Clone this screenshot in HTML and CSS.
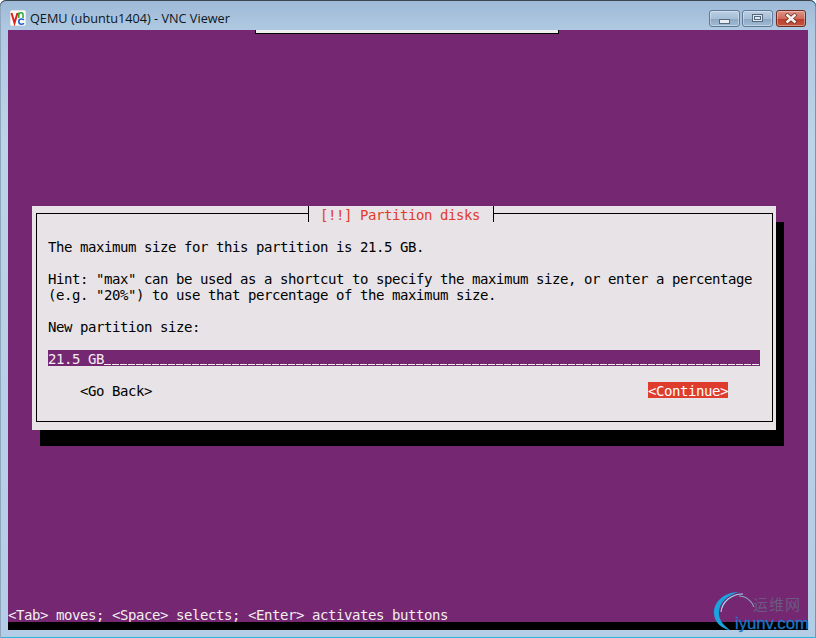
FILE: index.html
```html
<!DOCTYPE html>
<html lang="en">
<head>
<meta charset="utf-8">
<title>QEMU (ubuntu1404) - VNC Viewer</title>
<link rel="stylesheet" href="styles.css">
</head>
<body>
<div class="window">
  <header class="titlebar">
    <svg class="app-icon" width="16" height="16" viewBox="0 0 16 16">
      <rect x="0.5" y="0.5" width="15" height="15" rx="1.5" fill="#fff" stroke="#e6e6e6"/>
      <path d="M1.5 3 L4.5 13 L7.5 3" fill="none" stroke="#e0201c" stroke-width="2"/>
      <path d="M8.8 8 V2.5 M8.8 4.5 Q9.2 2.8 11 2.8 Q13 2.8 13 4.5 V8" fill="none" stroke="#2ca02c" stroke-width="1.5"/>
      <path d="M14 10 Q13 9 11.5 9 Q8.8 9 8.8 11.5 Q8.8 14.2 11.5 14.2 Q13 14.2 14 13.2" fill="none" stroke="#2060d0" stroke-width="1.6"/>
    </svg>
    <span class="title">QEMU (ubuntu1404) - VNC Viewer</span>
    <div class="controls">
      <div class="ctl"><span class="glyph-min"></span></div>
      <div class="ctl"><span class="glyph-max"></span></div>
      <div class="ctl ctl-close">
        <svg width="14" height="11" viewBox="0 0 14 11"><path d="M2 1 L12 10 M12 1 L2 10" stroke="#6a2c24" stroke-width="4"/><path d="M2.5 1.5 L11.5 9.5 M11.5 1.5 L2.5 9.5" stroke="#f6f2f0" stroke-width="2.6"/></svg>
      </div>
    </div>
  </header>
  <main class="screen">
    <div class="top-strip"></div>
    <section class="dialog">
      <div class="frame">
        <div class="dialog-title"><span>[!!] Partition disks</span></div>
        <p class="line">The maximum size for this partition is 21.5 GB.</p>
        <p class="line gap">Hint: "max" can be used as a shortcut to specify the maximum size, or enter a percentage</p>
        <p class="line">(e.g. "20%") to use that percentage of the maximum size.</p>
        <p class="line gap">New partition size:</p>
        <div class="field"><span>21.5 GB</span></div>
        <div class="buttons">
          <span class="btn">&lt;Go Back&gt;</span>
          <span class="btn btn-active">&lt;Continue&gt;</span>
        </div>
      </div>
    </section>
    <footer class="status">&lt;Tab&gt; moves; &lt;Space&gt; selects; &lt;Enter&gt; activates buttons</footer>
    <div class="screen-end"></div>
  </main>
  <div class="watermark">
    <svg class="wm-arc" width="48" height="44" viewBox="0 0 48 44">
      <path d="M26 1 C10 1 0 12 1 23 C2 32 9 38 17 39 C10 34 5 28 6 20 C7 11 15 4 26 1Z" fill="#1aa3de"/>
      <path d="M30 3 C18 3 9 11 8 21" fill="none" stroke="#a6d8ee" stroke-width="1.1"/>
      <path d="M26 5 C33 5 38 9 41 16" fill="none" stroke="#8aa9c4" stroke-width="1.1"/>
    </svg>
    <span class="wm-cn">运维网</span>
    <span class="wm-en">iyunv.com</span>
  </div>
</div>
</body>
</html>
```
FILE: styles.css
```css
html, body { margin: 0; padding: 0; width: 816px; height: 638px; overflow: hidden; background: #fff; }
.window {
  position: relative;
  width: 816px; height: 638px; box-sizing: border-box;
  padding: 0 8px 8px;
  border-radius: 6px 6px 0 0;
  background: linear-gradient(180deg, #9db9d6 0, #b0c9e2 30px, #bcd3e8 140px, #b4cde6 100%);
  box-shadow: inset 0 1px 0 #3c4650, inset 1px 0 0 #8fa6bd, inset -1px 0 0 #2bb5d8, inset 0 -1px 0 #2bb5d8;
  overflow: hidden;
}
.titlebar { height: 30px; box-sizing: border-box; padding: 10px 2px 0; display: flex; align-items: flex-start; }
.app-icon { flex: none; }
.title { margin-left: 4px; font: 12.7px/17px "Open Sans", "Noto Sans", sans-serif; color: #0c1620; }
.controls { margin-left: auto; display: flex; gap: 2px; }
.ctl {
  width: 31px; height: 17px; box-sizing: border-box; display: flex; align-items: center; justify-content: center;
  border: 1px solid #5f7a96; border-radius: 3px;
  background: linear-gradient(180deg, #bcd0e4 0, #a6bed6 50%, #8aa6c2 51%, #a4bcd4 100%);
  box-shadow: inset 0 0 0 1px rgba(255,255,255,.35);
}
.ctl-close {
  width: 30px; margin-left: 1px; border-color: #6e2a20;
  background: linear-gradient(180deg, #dc9488 0, #cf6a5a 50%, #b83c2c 51%, #c4563e 100%);
}
.glyph-min { width: 11px; height: 5px; margin-top: 5px; box-sizing: border-box; background: #e8eef4; border: 1px solid #55687c; }
.glyph-max { width: 11px; height: 8px; margin-top: -1px; box-sizing: border-box; background: #dfe8f1; border: 1px solid #55687c; box-shadow: inset 0 0 0 1px #dfe8f1, inset 0 0 0 2px #55687c; }

.screen {
  width: 800px; height: 600px;
  display: flex; flex-direction: column;
  background: #752772;
  font: 14px/18px "DejaVu Sans Mono", monospace;
  letter-spacing: -0.43px;
  color: #000;
}
.top-strip { flex: none; width: 304px; height: 4px; box-sizing: border-box; margin-left: 247px; background: #eee; border: solid #000; border-width: 0 1px 1px; }
.dialog {
  flex: none;
  width: 744px; height: 224px; box-sizing: border-box;
  margin: 172px 0 0 24px; padding: 7px 3px 8px 4px;
  background: #e7e3e6;
  box-shadow: 8px 16px 0 #000;
}
.frame { position: relative; height: 209px; box-sizing: border-box; border: 1px solid #000; padding: 24px 11px 0; }
.dialog-title {
  position: absolute; left: 271px; top: -8px; width: 186px; height: 16px; box-sizing: border-box;
  border: solid #000; border-width: 0 1px; background: #e7e3e6; color: #e03c2d; padding-left: 11px;
}
.line { margin: 0; height: 16px; white-space: pre; }
.gap { margin-top: 16px; }
.field {
  position: relative; width: 712px; height: 16px; margin-top: 16px;
  background: #752772; color: #f2eef0; overflow: hidden;
}
.field::after {
  content: ""; position: absolute; left: 56px; right: 0; bottom: 1px; height: 1px;
  background: repeating-linear-gradient(90deg, #f2eef0 0 7px, transparent 7px 8px);
}
.buttons { display: flex; justify-content: space-between; width: 712px; box-sizing: border-box; margin-top: 16px; padding: 0 32px; }
.btn { height: 16px; }
.btn-active { background: #e03c2d; color: #fff; }
.status { flex: none; height: 16px; margin-top: auto; color: #f2eef0; }
.screen-end { flex: none; height: 8px; background: #000; }

.watermark { position: absolute; left: 712px; top: 591px; width: 104px; height: 47px; }
.wm-arc { position: absolute; left: 1px; top: 0; }
.wm-cn { position: absolute; left: 41px; top: 4px; font: 15px/17px "Noto Sans CJK SC", sans-serif; letter-spacing: 1px; color: #6c5a80; }
.wm-en { position: absolute; left: 23px; top: 24px; font: 16.7px/18px "Liberation Sans", sans-serif; color: #1b76c4; -webkit-text-stroke: .3px #1b76c4; }
```
